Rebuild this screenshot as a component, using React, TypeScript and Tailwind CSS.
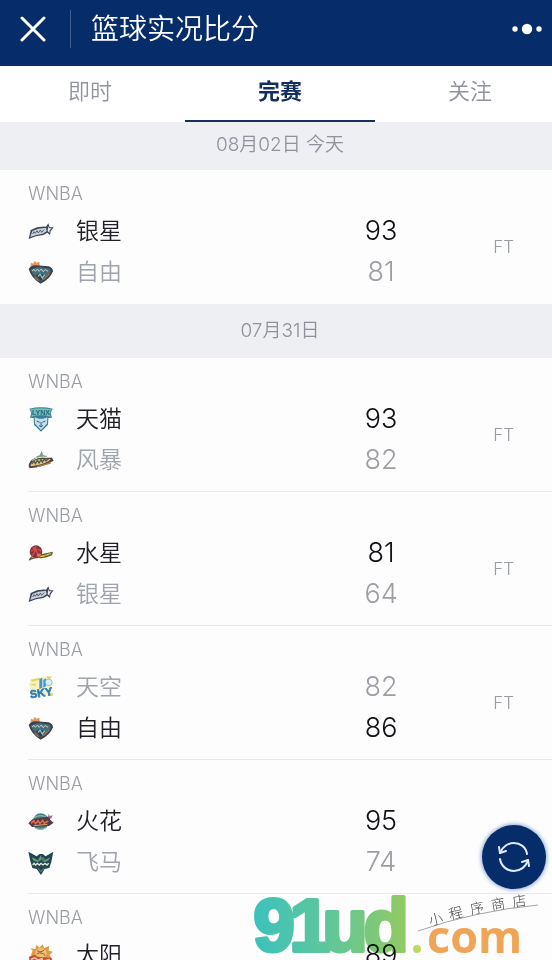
import type { ReactNode } from "react";

type TeamKey = "stars" | "liberty" | "lynx" | "storm" | "mercury" | "sky" | "sparks" | "wings" | "sun";

interface Side {
  team: TeamKey;
  score: number;
  won: boolean;
}

interface Match {
  sides: Side[];
  status?: string;
}

interface Day {
  label: string;
  compact?: boolean;
  matches: Match[];
}

const names: Record<TeamKey, string> = {
  stars: "银星",
  liberty: "自由",
  lynx: "天猫",
  storm: "风暴",
  mercury: "水星",
  sky: "天空",
  sparks: "火花",
  wings: "飞马",
  sun: "太阳",
};

const days: Day[] = [
  {
    label: "08月02日 今天",
    compact: true,
    matches: [
      {
        sides: [
          { team: "stars", score: 93, won: true },
          { team: "liberty", score: 81, won: false },
        ],
        status: "FT",
      },
    ],
  },
  {
    label: "07月31日",
    matches: [
      {
        sides: [
          { team: "lynx", score: 93, won: true },
          { team: "storm", score: 82, won: false },
        ],
        status: "FT",
      },
      {
        sides: [
          { team: "mercury", score: 81, won: true },
          { team: "stars", score: 64, won: false },
        ],
        status: "FT",
      },
      {
        sides: [
          { team: "sky", score: 82, won: false },
          { team: "liberty", score: 86, won: true },
        ],
        status: "FT",
      },
      {
        sides: [
          { team: "sparks", score: 95, won: true },
          { team: "wings", score: 74, won: false },
        ],
      },
      { sides: [{ team: "sun", score: 89, won: true }] },
    ],
  },
];

const logos: Record<TeamKey, ReactNode> = {
  stars: (
    <>
      <path d="M2 60 L8 33 Q30 21 54 23 L61 13 L65 25 L77 25 L68 37 L66 48 L58 41 L46 48 Q24 50 2 60Z" fill="#3d4757" />
      <path d="M7 54 L13 36 Q32 26 54 27 L56 37 L44 44 Q24 46 7 54Z" fill="#c9d2de" />
      <path d="M14 45 l4 -7 l4 5 l5 -8 l4 7 l6 -9 l4 7 l7 -8" fill="none" stroke="#525d70" strokeWidth="3" />
      <path d="M61 20 L63 28 L71 28 L65 34 L64 41 L59 36Z" fill="#eef1f5" />
    </>
  ),
  liberty: (
    <>
      <path d="M10 26 Q6 16 9 8 L16 11 L20 2 L26 8 L34 5 L36 22Z" fill="#e8945a" />
      <path d="M2 27 Q8 17 22 16 L62 19 Q74 23 75 34 Q66 58 38 71 Q10 55 2 27Z" fill="#3b424d" />
      <path d="M8 29 Q20 21 38 22 L66 26 L68 36 Q58 53 38 64 Q16 50 8 29Z" fill="#47707d" />
      <path d="M12 33 l6 -5 l4 6 l6 -7 l5 7 l7 -7 l5 8 l7 -6 l8 5" fill="none" stroke="#c3d5d8" strokeWidth="3" />
      <path d="M22 46 L36 39 L52 48 L38 62Z" fill="#343c49" />
      <path d="M30 50 L36 42 L43 54 L50 45" fill="none" stroke="#8fc1c4" strokeWidth="4" />
      <path d="M20 52 L32 62 M46 60 L64 42" stroke="#d07b4b" strokeWidth="3" />
    </>
  ),
  lynx: (
    <>
      <path d="M4 5 Q39 -3 74 5 L68 18 L72 32 L61 33 L60 53 L39 74 L18 53 L17 33 L6 32 L10 18Z" fill="#367e91" />
      <path d="M6 7 Q39 1 71 7 L65 18 L68 29 Q39 21 10 29 L13 18Z" fill="#74bdb6" />
      <text x="39" y="25" textAnchor="middle" fontSize="21" fontWeight="700" fontFamily="Liberation Sans, sans-serif" fill="#23667d">LYNX</text>
      <path d="M20 31 L33 35 L45 35 L58 31 L57 50 L39 69 L21 50Z" fill="#c5dfe9" />
      <path d="M26 42 l9 4 M52 42 l-9 4 M33 55 l6 5 l6 -5 M39 45 v12" fill="none" stroke="#315d83" strokeWidth="3" />
    </>
  ),
  storm: (
    <>
      <path d="M25 25 L35 22 L41 9 L46 22 L58 24 L51 31 L27 31Z" fill="#7b9e8c" />
      <path d="M2 55 Q3 36 23 29 L72 29 L77 38 L64 44 Q45 57 5 61Z" fill="#53413b" />
      <path d="M8 52 Q13 35 34 34 L68 33 L62 40 Q39 52 8 55Z" fill="#e2c78a" />
      <path d="M12 48 l6 -9 l4 8 l6 -10 l5 8 l6 -10 l4 7 l7 -9 l4 6 l7 -7" fill="none" stroke="#4b5a44" strokeWidth="4" />
      <path d="M27 56 L68 45" stroke="#b9744b" strokeWidth="4" />
      <path d="M13 38 Q27 25 57 28" stroke="#e5e6cf" strokeWidth="3" fill="none" />
    </>
  ),
  mercury: (
    <>
      <path d="M2 59 Q6 44 24 43 L75 32 L72 43 L56 49 L39 52 Q20 49 2 59Z" fill="#5e5424" />
      <path d="M7 52 Q20 43 37 45 L71 35 L67 41 L43 48Z" fill="#e3cf51" />
      <circle cx="24" cy="32" r="19" fill="#82334c" />
      <path d="M9 31 Q24 20 40 30 M14 20 Q30 31 32 49 M22 15 Q25 30 12 45" fill="none" stroke="#d94d3c" strokeWidth="4" />
      <path d="M27 39 Q33 35 40 40 L36 47 L26 46Z" fill="#e57a35" />
      <path d="M48 46 l7 -5 l4 3 l10 -6" fill="none" stroke="#7f8e38" strokeWidth="3" />
    </>
  ),
  sky: (
    <>
      <path d="M8 13 L42 5 L73 5 L63 15 L75 25 L66 43 L76 60 L51 61 L8 71 L13 52 L3 29Z" fill="#f4f2c0" />
      <path d="M9 14 L35 9 L33 15 L12 20Z M56 4 L73 5 L60 15Z M5 29 L23 25 L23 33Z M62 58 L76 54 L74 62 L58 64Z" fill="#e3d660" />
      <path d="M34 12 l9 -4 v30 l-9 4z M46 14 l8 -4 v24 l-8 4z" fill="#4b94cb" />
      <circle cx="62" cy="22" r="10" fill="#d9eff3" stroke="#67add2" strokeWidth="2" />
      <text transform="rotate(-9 39 50)" x="39" y="65" textAnchor="middle" fontSize="33" fontWeight="700" fontFamily="Liberation Sans, sans-serif" fill="#327bb9" stroke="#327bb9" strokeWidth="2">SKY</text>
    </>
  ),
  sparks: (
    <>
      <ellipse cx="38" cy="38" rx="24" ry="25" fill="#438484" />
      <path d="M17 27 Q38 13 60 27 M20 57 Q39 66 57 55" fill="none" stroke="#9bc5b9" strokeWidth="3" />
      <path d="M1 43 L14 30 L66 22 L66 32 L77 41 L63 51 L12 54Z" fill="#533b46" />
      <path d="M9 43 l8 -8 l6 9 l7 -9 l6 9 l8 -10 l5 9 l12 -7" fill="none" stroke="#e06949" strokeWidth="5" />
      <path d="M17 50 L58 46" stroke="#e1a25c" strokeWidth="3" />
      <path d="M61 14 L66 21 L74 19 L69 29 L62 27Z" fill="#986b92" />
    </>
  ),
  wings: (
    <>
      <path d="M1 5 L26 19 L35 12 L44 12 L53 19 L76 5 L70 35 L64 54 L50 57 L39 75 L26 57 L13 54 L7 33Z" fill="#234452" />
      <path d="M11 20 L29 29 L36 20 L47 22 L52 29 L67 20 L60 34 L48 36 L39 30 L30 37 L15 32Z" fill="#4c7c66" />
      <path d="M14 26 L30 34 M64 26 L49 34 M38 17 L35 32" stroke="#98b899" strokeWidth="2" />
      <path d="M14 45 l4 -5 l5 5 l5 -5 l6 5 l5 -5 l6 5 l6 -5 l6 5 l5 -5" fill="none" stroke="#e3e9df" strokeWidth="4" />
      <path d="M30 55 L39 65 L48 55" fill="none" stroke="#739577" strokeWidth="3" />
    </>
  ),
  sun: (
    <>
      <path d="M9 36 L14 23 L7 16 L22 18 L25 5 L34 14 L44 4 L49 15 L64 9 L62 23 L75 26 L64 36 L73 47 L48 48Z" fill="#e49842" />
      <circle cx="39" cy="31" r="17" fill="#ecc073" />
      <path d="M28 23 Q39 31 49 20 M26 33 Q40 24 52 38" fill="none" stroke="#91583e" strokeWidth="3" />
      <path d="M3 42 Q18 31 29 41 L69 44 L75 54 L52 65 L5 62Z" fill="#c44f36" />
      <path d="M9 50 Q21 40 29 52 L42 47 L44 56 L65 49" fill="none" stroke="#f0c299" strokeWidth="5" />
    </>
  ),
};

function TeamRow({ team, score, won }: Side) {
  return (
    <div className="flex h-[41px] items-center">
      <svg viewBox="0 0 78 78" className="size-[26px] shrink-0" aria-hidden="true">
        {logos[team]}
      </svg>
      <span className={`ml-[22px] flex-1 text-[23px] font-[350] ${won ? "text-[#202027]" : "text-[#9fa3ac]"}`}>
        {names[team]}
      </span>
      <span className={`flex w-8 justify-center text-[27px] ${won ? "text-[#111116]" : "text-[#9c9ea4]"}`}>{score}</span>
    </div>
  );
}

function MatchCard({ match }: { match: Match }) {
  return (
    <article className="ml-7 border-b border-[#e9e9ed] pt-[13px] pb-[10px] last:border-transparent">
      <h3 className="h-7 text-[18px] leading-[22px] text-[#9a9da6]">WNBA</h3>
      <div className="flex">
        <div className="flex-1">
          {match.sides.map((side) => (
            <TeamRow key={side.team} {...side} />
          ))}
        </div>
        <div className="flex w-[155px] items-center justify-end pr-[38px] pb-2 text-[17px] text-[#999da3]">
          {match.status}
        </div>
      </div>
    </article>
  );
}

function StoreMark() {
  return (
    <svg
      viewBox="0 0 312 72"
      className="pointer-events-none absolute right-0 bottom-0 h-[72px] w-[312px]"
      role="img"
      aria-label="91ud.com 小程序商店"
    >
      <defs>
        <linearGradient id="mark" gradientUnits="userSpaceOnUse" x1="15" y1="0" x2="165" y2="0">
          <stop offset="0" stopColor="#3cc4bb" />
          <stop offset="0.5" stopColor="#61c89b" />
          <stop offset="1" stopColor="#92cc63" />
        </linearGradient>
      </defs>
      <g
        fill="url(#mark)"
        stroke="url(#mark)"
        strokeWidth="4"
        strokeLinejoin="round"
        fontFamily="Liberation Sans, sans-serif"
        fontWeight="700"
        fontSize="74"
        textAnchor="middle"
      >
        <text x="34" y="63">9</text>
        <text x="70" y="63">1</text>
        <text x="105" y="63">u</text>
        <text x="146" y="63">d</text>
      </g>
      <circle cx="177" cy="61" r="4" fill="#c1dc61" />
      <text x="187" y="65" fontFamily="Open Sans, sans-serif" fontWeight="700" fontSize="45" fill="#f2a555">
        com
      </text>
      <path d="M178 43 Q235 23 298 17" fill="none" stroke="#a5a5a5" strokeWidth="1" />
      <g fontFamily="Noto Sans CJK SC, sans-serif" fontWeight="300" fontSize="14" fill="#45454a" textAnchor="middle">
        <text transform="translate(197 36) rotate(-14)">小</text>
        <text transform="translate(217 30) rotate(-14)">程</text>
        <text transform="translate(238 25) rotate(-12)">序</text>
        <text transform="translate(259 21) rotate(-10)">商</text>
        <text transform="translate(280 18) rotate(-8)">店</text>
      </g>
    </svg>
  );
}

const tabs = ["即时", "完赛", "关注"];

export default function App() {
  return (
    <div className="relative flex h-screen flex-col overflow-hidden bg-[#fdfdfe] font-['Inter','Noto_Sans_CJK_SC',sans-serif] font-light">
      <header className="flex h-[66px] shrink-0 items-center bg-[#062d69] px-5 pb-2 text-white">
        <button type="button" aria-label="关闭" className="size-[26px]">
          <svg viewBox="0 0 26 26" className="size-[26px]" fill="none" stroke="currentColor" strokeWidth="3" strokeLinecap="round">
            <path d="M2 2 L24 24 M24 2 L2 24" />
          </svg>
        </button>
        <span className="ml-6 h-[38px] w-px bg-[#3f5c8b]" />
        <h1 className="ml-5 flex-1 text-[28px] leading-[38px] font-[350]">篮球实况比分</h1>
        <button type="button" aria-label="更多" className="-mr-3 h-6 w-8">
          <svg viewBox="0 0 32 24" className="h-6 w-8" fill="currentColor">
            <circle cx="3" cy="12" r="2.7" />
            <circle cx="15" cy="12" r="5.2" />
            <circle cx="27" cy="12" r="2.7" />
          </svg>
        </button>
      </header>

      <nav className="-mr-[13px] -ml-[5px] grid h-14 shrink-0 grid-cols-3 bg-white">
        {tabs.map((tab, i) => (
          <button
            key={tab}
            type="button"
            className={
              i === 1
                ? "border-b-2 border-[#1a2f57] pb-1 text-[22px] font-bold text-[#122d5e]"
                : "border-b-2 border-transparent pb-1 text-[22px] font-[350] text-[#9093a0]"
            }
          >
            {tab}
          </button>
        ))}
      </nav>

      <main className="min-h-0 flex-1 overflow-y-auto [scrollbar-width:none]">
        {days.map((day) => (
          <section key={day.label}>
            <h2
              className={`flex items-center justify-center bg-[#eeeff3] pl-2 text-[19px] font-[350] text-[#8f929c] ${
                day.compact ? "h-12 pb-[2px]" : "h-[54px]"
              }`}
            >
              {day.label}
            </h2>
            {day.matches.map((match, i) => (
              <MatchCard key={i} match={match} />
            ))}
          </section>
        ))}
      </main>

      {/* The 91ud mark lies over the list; the last score stays readable through it */}
      <div className="pointer-events-none absolute inset-0 mix-blend-multiply">
        <StoreMark />
      </div>

      <button
        type="button"
        aria-label="刷新"
        className="absolute right-[6px] bottom-[71px] flex size-16 items-center justify-center rounded-full bg-[#062d69] text-[#dfeaff] shadow-[0_0_5px_#5c7fb5]"
      >
        <svg viewBox="0 0 32 30" className="h-[30px] w-8" fill="none" stroke="currentColor" strokeWidth="2" strokeLinecap="round" strokeLinejoin="round">
          <path d="M29 12 C28 5 22 1 16 1 C10 1 4 5 2 11" />
          <path d="M1 5 L2 11 L8 9" />
          <path d="M2 17 C3 24 9 29 16 29 C22 29 28 25 30 18" />
          <path d="M31 24 L30 18 L24 20" />
        </svg>
      </button>
    </div>
  );
}
